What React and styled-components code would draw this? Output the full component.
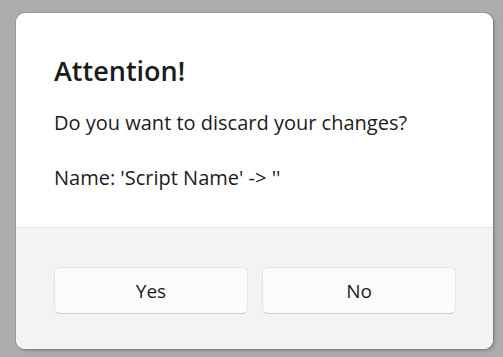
import React from 'react';
import styled, { createGlobalStyle } from 'styled-components';

const GlobalStyle = createGlobalStyle`
  html, body {
    margin: 0;
    padding: 0;
    background: #acacac;
  }
  body {
    font-family: 'Open Sans', 'Noto Sans', sans-serif;
    color: #1b1b1b;
  }
`;

const Backdrop = styled.div`
  width: 503px;
  height: 357px;
  box-sizing: border-box;
  padding: 13px 0 0 16px;
`;

const Dialog = styled.div`
  width: 477px;
  height: 336px;
  display: flex;
  flex-direction: column;
  background: #ffffff;
  border-radius: 9px;
  overflow: hidden;
  box-shadow: 0 0 0 1px rgba(0, 0, 0, 0.1), 2px 2px 3px rgba(0, 0, 0, 0.18);
`;

const Content = styled.div`
  height: 215px;
  box-sizing: border-box;
  padding: 40px 38px 0;
  border-bottom: 1px solid #e4e4e4;
`;

const Title = styled.h1`
  margin: 0 0 20px;
  font-size: 27px;
  line-height: 36px;
  font-weight: 600;
`;

const Text = styled.p`
  margin: 0 0 ${(p) => p.gap || 0}px;
  font-size: 20px;
  line-height: 28px;
  font-weight: 400;
`;

const Footer = styled.div`
  flex: 1;
  background: #f3f3f3;
  display: grid;
  grid-template-columns: 1fr 1fr;
  gap: 14px;
  padding: 39px 37px 0 38px;
  align-items: start;
`;

const Button = styled.button`
  height: 47px;
  box-sizing: border-box;
  background: #fbfbfb;
  border: 1px solid #e5e5e5;
  border-bottom-color: #cccccc;
  border-radius: 6px;
  font-family: inherit;
  font-size: 19px;
  color: #1b1b1b;
  padding: 0;
`;

export default function App() {
  return (
    <>
      <GlobalStyle />
      <Backdrop>
        <Dialog>
          <Content>
            <Title>Attention!</Title>
            <Text gap={27}>Do you want to discard your changes?</Text>
            <Text>Name: 'Script Name' -&gt; ''</Text>
          </Content>
          <Footer>
            <Button>Yes</Button>
            <Button>No</Button>
          </Footer>
        </Dialog>
      </Backdrop>
    </>
  );
}
